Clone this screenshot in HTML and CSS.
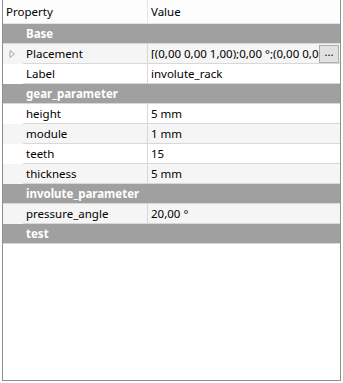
FILE: index.html
```html
<!DOCTYPE html>
<html>
<head>
<meta charset="utf-8">
<link rel="stylesheet" href="styles.css">
</head>
<body>
<div class="frame">
  <div class="header">
    <div class="hcell hprop">Property</div>
    <div class="hcell hval">Value</div>
  </div>
  <div class="row group"><div class="gname">Base</div></div>
  <div class="row alt">
    <div class="indent"><svg class="arrow" width="7" height="10" viewBox="0 0 7 10"><path d="M1 1.5 L5.5 5 L1 8.5 Z" fill="none" stroke="#a6a6a6" stroke-width="1"/></svg></div>
    <div class="cell prop">Placement</div>
    <div class="cell val"><span class="clip">[(0,00 0,00 1,00);0,00 °;(0,00 0,00 0,00)]</span><span class="btn">...</span></div>
  </div>
  <div class="row">
    <div class="indent"></div>
    <div class="cell prop">Label</div>
    <div class="cell val"><span class="txt">involute_rack</span></div>
  </div>
  <div class="row group"><div class="gname">gear_parameter</div></div>
  <div class="row">
    <div class="indent"></div>
    <div class="cell prop">height</div>
    <div class="cell val"><span class="txt">5 mm</span></div>
  </div>
  <div class="row alt">
    <div class="indent"></div>
    <div class="cell prop">module</div>
    <div class="cell val"><span class="txt">1 mm</span></div>
  </div>
  <div class="row">
    <div class="indent"></div>
    <div class="cell prop">teeth</div>
    <div class="cell val"><span class="txt">15</span></div>
  </div>
  <div class="row alt">
    <div class="indent"></div>
    <div class="cell prop">thickness</div>
    <div class="cell val"><span class="txt">5 mm</span></div>
  </div>
  <div class="row group"><div class="gname">involute_parameter</div></div>
  <div class="row alt">
    <div class="indent"></div>
    <div class="cell prop">pressure_angle</div>
    <div class="cell val"><span class="txt">20,00 °</span></div>
  </div>
  <div class="row group"><div class="gname">test</div></div>
</div>
</body>
</html>
```

FILE: styles.css
```css
html, body {
  margin: 0;
  padding: 0;
  background: #ffffff;
}
body {
  width: 344px;
  height: 383px;
  font-family: "Noto Sans", "Open Sans", sans-serif;
  font-size: 11.5px;
  color: #000;
  border-right: 1px solid #d0d0d0;
  box-sizing: border-box;
}
.frame {
  margin-left: 2px;
  width: 339px;
  height: 381px;
  box-sizing: border-box;
  border-left: 1px solid #8c8f94;
  border-right: 1px solid #8c8f94;
  border-bottom: 1px solid #8c8f94;
  background: #fff;
  overflow: hidden;
}
.header {
  display: grid;
  grid-template-columns: 145px minmax(0, 1fr);
  height: 24px;
  box-sizing: border-box;
  border-bottom: 1px solid #e3e6ea;
  background: #fdfdfd;
}
.hcell {
  display: flex;
  align-items: center;
  line-height: 1;
  padding-left: 3px;
  padding-top: 1px;
}
.hprop {
  border-right: 1px solid #e5e5e5;
}
.row {
  display: grid;
  grid-template-columns: 20px 125px minmax(0, 1fr);
  height: 20px;
  background: #ffffff;
}
.row.alt {
  background: #f5f5f5;
}
.row.group {
  display: flex;
  background: #a0a0a0;
  border-bottom: 1px solid #d8d8d8;
  box-sizing: border-box;
}
.gname {
  padding-left: 23px;
  color: #ffffff;
  font-weight: bold;
  display: flex;
  align-items: center;
  line-height: 1;
}
.indent {
  display: flex;
  align-items: center;
  justify-content: center;
}
.arrow {
  margin-left: -2px;
}
.cell {
  display: flex;
  align-items: center;
  box-sizing: border-box;
  border-bottom: 1px solid #d8d8d8;
  line-height: 1;
  white-space: nowrap;
  overflow: hidden;
  padding-left: 3px;
}
.prop {
  border-right: 1px solid #d8d8d8;
}
.clip {
  flex: 1;
  min-width: 0;
  overflow: hidden;
  white-space: nowrap;
  display: block;
}
.btn {
  width: 20px;
  height: 18px;
  flex-shrink: 0;
  box-sizing: border-box;
  border: 1px solid #adadad;
  background: #e1e1e1;
  display: flex;
  align-items: center;
  justify-content: center;
  font-size: 11px;
  padding-bottom: 4px;
  margin-right: 1px;
}
```
